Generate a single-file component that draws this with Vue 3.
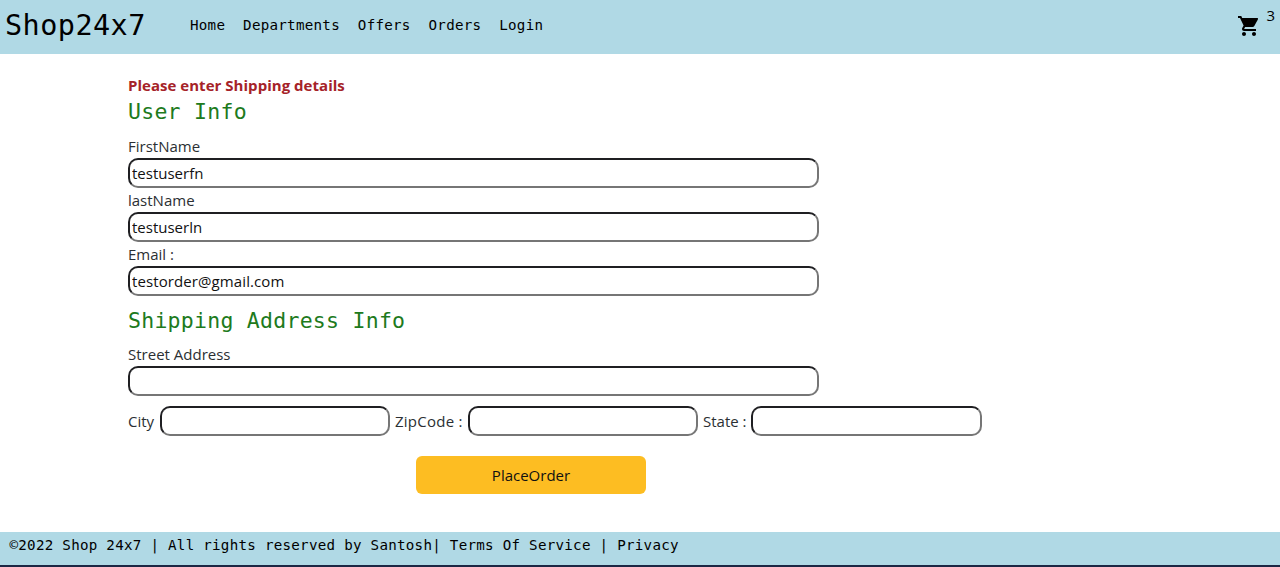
<script setup>
import { ref } from 'vue'

const links = ['Home', 'Departments', 'Offers', 'Orders', 'Login']
const cartCount = ref(3)
const userFields = ref([
  { id: 'first', label: 'FirstName', value: 'testuserfn' },
  { id: 'last', label: 'lastName', value: 'testuserln' },
  { id: 'email', label: 'Email :', value: 'testorder@gmail.com' },
])
const street = ref('')
const place = ref([
  { id: 'city', label: 'City', value: '' },
  { id: 'zip', label: 'ZipCode :', value: '' },
  { id: 'state', label: 'State :', value: '' },
])
</script>

<template>
  <div class="page">
    <header class="bar">
      <div class="logo">Shop24x7</div>
      <nav class="nav">
        <a v-for="l in links" :key="l">{{ l }}</a>
      </nav>
      <div class="cart">
        <svg viewBox="0 0 24 24" width="24" height="24">
          <path d="M7 18c-1.1 0-1.99.9-1.99 2S5.9 22 7 22s2-.9 2-2-.9-2-2-2zM1 2v2h2l3.6 7.59-1.35 2.45c-.16.28-.25.61-.25.96 0 1.1.9 2 2 2h12v-2H7.42c-.14 0-.25-.11-.25-.25l.03-.12.9-1.63h7.45c.75 0 1.41-.41 1.75-1.03l3.58-6.49A1.003 1.003 0 0 0 20 4H5.21l-.94-2H1zm16 16c-1.1 0-1.99.9-1.99 2s.89 2 1.99 2 2-.9 2-2-.9-2-2-2z" />
        </svg>
        <span class="count">{{ cartCount }}</span>
      </div>
    </header>

    <form class="form" @submit.prevent>
      <p class="notice">Please enter Shipping details</p>
      <h2 class="title user">User Info</h2>
      <template v-for="f in userFields" :key="f.id">
        <label :for="f.id">{{ f.label }}</label>
        <input :id="f.id" v-model="f.value" class="wide" />
      </template>
      <h2 class="title ship">Shipping Address Info</h2>
      <label for="street">Street Address</label>
      <input id="street" v-model="street" class="wide" />
      <div class="place">
        <template v-for="f in place" :key="f.id">
          <label :for="f.id" :class="f.id">{{ f.label }}</label>
          <input :id="f.id" v-model="f.value" class="short" />
        </template>
      </div>
      <button class="order">PlaceOrder</button>
    </form>

    <footer class="footer">©2022 Shop 24x7 | All rights reserved by Santosh| Terms Of Service | Privacy</footer>
  </div>
</template>

<style>
body {
  margin: 0;
  overflow: hidden;
}
</style>

<style scoped>
.page {
  box-sizing: border-box;
  display: flex;
  flex-direction: column;
  height: 567px;
  background: #fff;
  color: #2b2f33;
  font-family: "Open Sans", "Noto Sans", sans-serif;
  font-size: 15px;
  border-bottom: 2px solid #1b2744;
}
.bar {
  display: flex;
  flex: none;
  height: 54px;
  background: #b0d9e5;
  color: #000;
}
.logo {
  width: 185px;
  padding-left: 5px;
  box-sizing: border-box;
  font-family: "DejaVu Sans Mono", monospace;
  font-size: 28.5px;
  line-height: 52px;
  letter-spacing: 0.44px;
}
.nav {
  display: flex;
  gap: 17.9px;
  padding-left: 5px;
  font-family: "DejaVu Sans Mono", monospace;
  font-size: 14.2px;
  letter-spacing: 0.26px;
  line-height: 51px;
}
.cart {
  display: flex;
  margin-left: auto;
  padding-right: 5px;
}
.cart svg {
  margin: 14px 5px 0 0;
}
.count {
  line-height: 31px;
}
.form {
  display: flex;
  flex: 1;
  flex-direction: column;
  align-items: flex-start;
  padding: 20px 0 0 128px;
}
.notice {
  margin: 0;
  height: 24px;
  line-height: 23px;
  letter-spacing: 0.03px;
  font-weight: 700;
  color: #a52228;
}
.title {
  margin: 0;
  font-family: "DejaVu Sans Mono", monospace;
  font-weight: 400;
  font-size: 21.5px;
  letter-spacing: 0.26px;
  line-height: 29px;
  height: 36px;
  color: #207a1c;
}
.title.user {
  line-height: 28px;
}
.title.ship {
  margin-top: 10px;
}
label {
  height: 24px;
  line-height: 25px;
  white-space: nowrap;
}
.wide,
.short {
  box-sizing: border-box;
  height: 30px;
  padding: 1px 2px;
  border: 2px solid #767676;
  border-top-color: #1f1f22;
  border-left-color: #1f1f22;
  border-radius: 10px;
  background: #fff;
  color: #111;
  font: inherit;
  outline: none;
}
.wide {
  width: 691px;
}
.short {
  width: 100%;
}
.place {
  display: grid;
  grid-template-columns: 32px 230px 78px 230px 53px 231px;
  align-items: center;
  margin-top: 10px;
}
.place label {
  line-height: 24px;
}
.place input + label {
  padding-left: 5px;
}
.place .zip {
  letter-spacing: 0.25px;
}
#email {
  letter-spacing: 0.1px;
}
.order {
  width: 230px;
  height: 38px;
  margin: 20px 0 0 288px;
  padding: 0;
  border: 0;
  border-radius: 6px;
  background: #fdbd22;
  color: #111;
  font: inherit;
}
.footer {
  flex: none;
  height: 33px;
  padding-left: 9.5px;
  background: #b0d9e5;
  color: #000;
  font-family: "DejaVu Sans Mono", monospace;
  font-size: 14.2px;
  letter-spacing: 0.265px;
  line-height: 27px;
}
</style>
